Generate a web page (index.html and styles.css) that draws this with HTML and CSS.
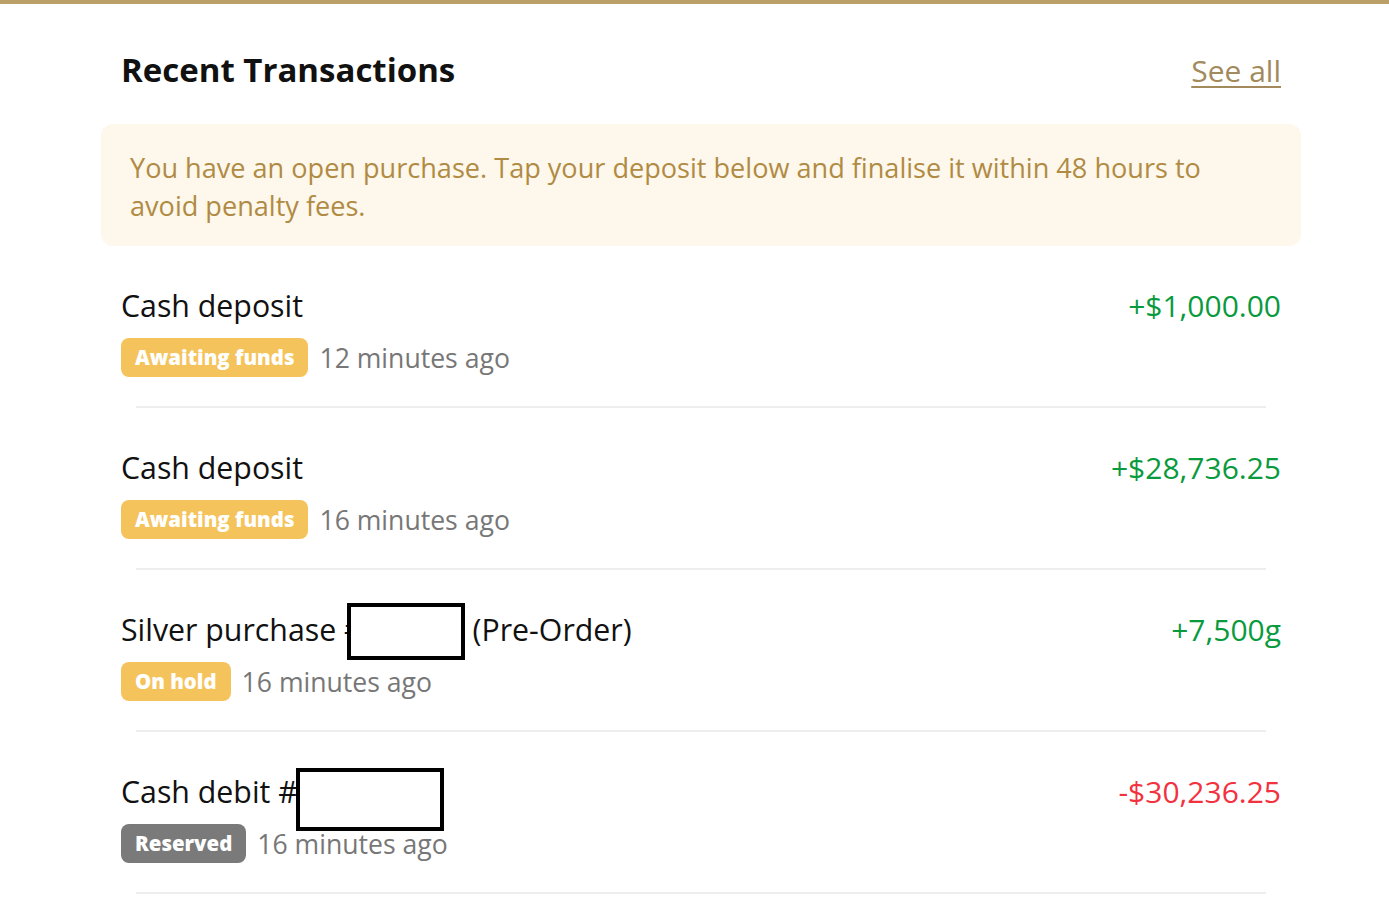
FILE: index.html
```html
<!DOCTYPE html>
<html lang="en">
<head>
    <meta charset="UTF-8">
    <meta name="viewport" content="width=device-width, initial-scale=1.0">
    <title>Recent Transactions</title>
    <link rel="stylesheet" href="styles.css">
</head>
<body>
    <div class="panel">
        <div class="panel-header">
            <h2>Recent Transactions</h2>
            <a href="#" class="see-all">See all</a>
        </div>

        <div class="notice">
            You have an open purchase. Tap your deposit below and finalise it within 48 hours to avoid penalty fees.
        </div>

        <div class="txn">
            <div class="txn-row">
                <div class="txn-info">
                    <div class="txn-title">Cash deposit</div>
                    <div class="txn-meta">
                        <span class="badge badge-warning">Awaiting funds</span>
                        <span class="txn-time">12 minutes ago</span>
                    </div>
                </div>
                <div class="txn-amount credit">+$1,000.00</div>
            </div>
        </div>

        <div class="txn">
            <div class="txn-row">
                <div class="txn-info">
                    <div class="txn-title">Cash deposit</div>
                    <div class="txn-meta">
                        <span class="badge badge-warning">Awaiting funds</span>
                        <span class="txn-time">16 minutes ago</span>
                    </div>
                </div>
                <div class="txn-amount credit">+$28,736.25</div>
            </div>
        </div>

        <div class="txn">
            <div class="txn-row">
                <div class="txn-info">
                    <div class="txn-title">Silver purchase #<span class="redacted redacted-sm"></span> (Pre-Order)</div>
                    <div class="txn-meta">
                        <span class="badge badge-warning">On hold</span>
                        <span class="txn-time">16 minutes ago</span>
                    </div>
                </div>
                <div class="txn-amount credit">+7,500g</div>
            </div>
        </div>

        <div class="txn">
            <div class="txn-row">
                <div class="txn-info">
                    <div class="txn-title">Cash debit #<span class="redacted redacted-lg"></span></div>
                    <div class="txn-meta">
                        <span class="badge badge-muted">Reserved</span>
                        <span class="txn-time">16 minutes ago</span>
                    </div>
                </div>
                <div class="txn-amount debit">-$30,236.25</div>
            </div>
        </div>
    </div>
</body>
</html>
```

FILE: styles.css
```css
body {
    margin: 0;
    padding: 0;
    font-family: "Segoe UI", "Open Sans", "Noto Sans", sans-serif;
    color: #111;
    background-color: #fff;
    border-top: 4px solid #baa068;
}

.panel {
    width: 1200px;
    margin-left: 101px;
}

.panel-header {
    display: flex;
    justify-content: space-between;
    align-items: baseline;
    padding: 42px 20px 30px;
}

.panel-header h2 {
    margin: 0;
    font-size: 33px;
    font-weight: 700;
    line-height: 48px;
    color: #111;
}

.see-all {
    font-size: 30px;
    color: #a28a5c;
    text-decoration: underline;
    text-decoration-thickness: 2px;
    text-underline-offset: 4px;
}

.notice {
    background-color: #fef7ec;
    border-radius: 12px;
    padding: 25px 80px 21px 29px;
    font-size: 27.1px;
    line-height: 38px;
    color: #b08b43;
}

.txn {
    padding: 0 20px;
}

.txn-row {
    display: flex;
    justify-content: space-between;
    align-items: flex-start;
    padding: 36px 0 29px;
}

.txn::after {
    content: "";
    display: block;
    height: 2px;
    margin: 0 15px;
    background-color: #eee;
}

.txn-title {
    font-size: 30.3px;
    line-height: 48px;
    color: #111;
}

.txn-meta {
    display: flex;
    align-items: center;
    gap: 11px;
    margin-top: 8px;
}

.badge {
    display: inline-block;
    height: 39px;
    line-height: 39px;
    padding: 0 14px;
    border-radius: 8px;
    font-size: 20.4px;
    font-weight: 800;
    color: #fff;
}

.badge-warning {
    background-color: #f5c35b;
}

.badge-muted {
    background-color: #7a7a7a;
}

.txn-time {
    font-size: 26.6px;
    color: #777;
}

.txn-amount {
    font-size: 30px;
    line-height: 48px;
}

.credit {
    color: #0a9a3e;
}

.debit {
    color: #f2323f;
}

/* blanked-out reference numbers */
.redacted {
    position: relative;
    z-index: 1;
    display: inline-block;
    box-sizing: border-box;
    border: 4px solid #000;
    background-color: #fff;
    vertical-align: top;
}

.redacted-sm {
    width: 118px;
    height: 57px;
    margin: -3px 0 -9px -17px;
}

.redacted-lg {
    width: 148px;
    height: 63px;
    margin: 0 0 -15px -2px;
}
```
